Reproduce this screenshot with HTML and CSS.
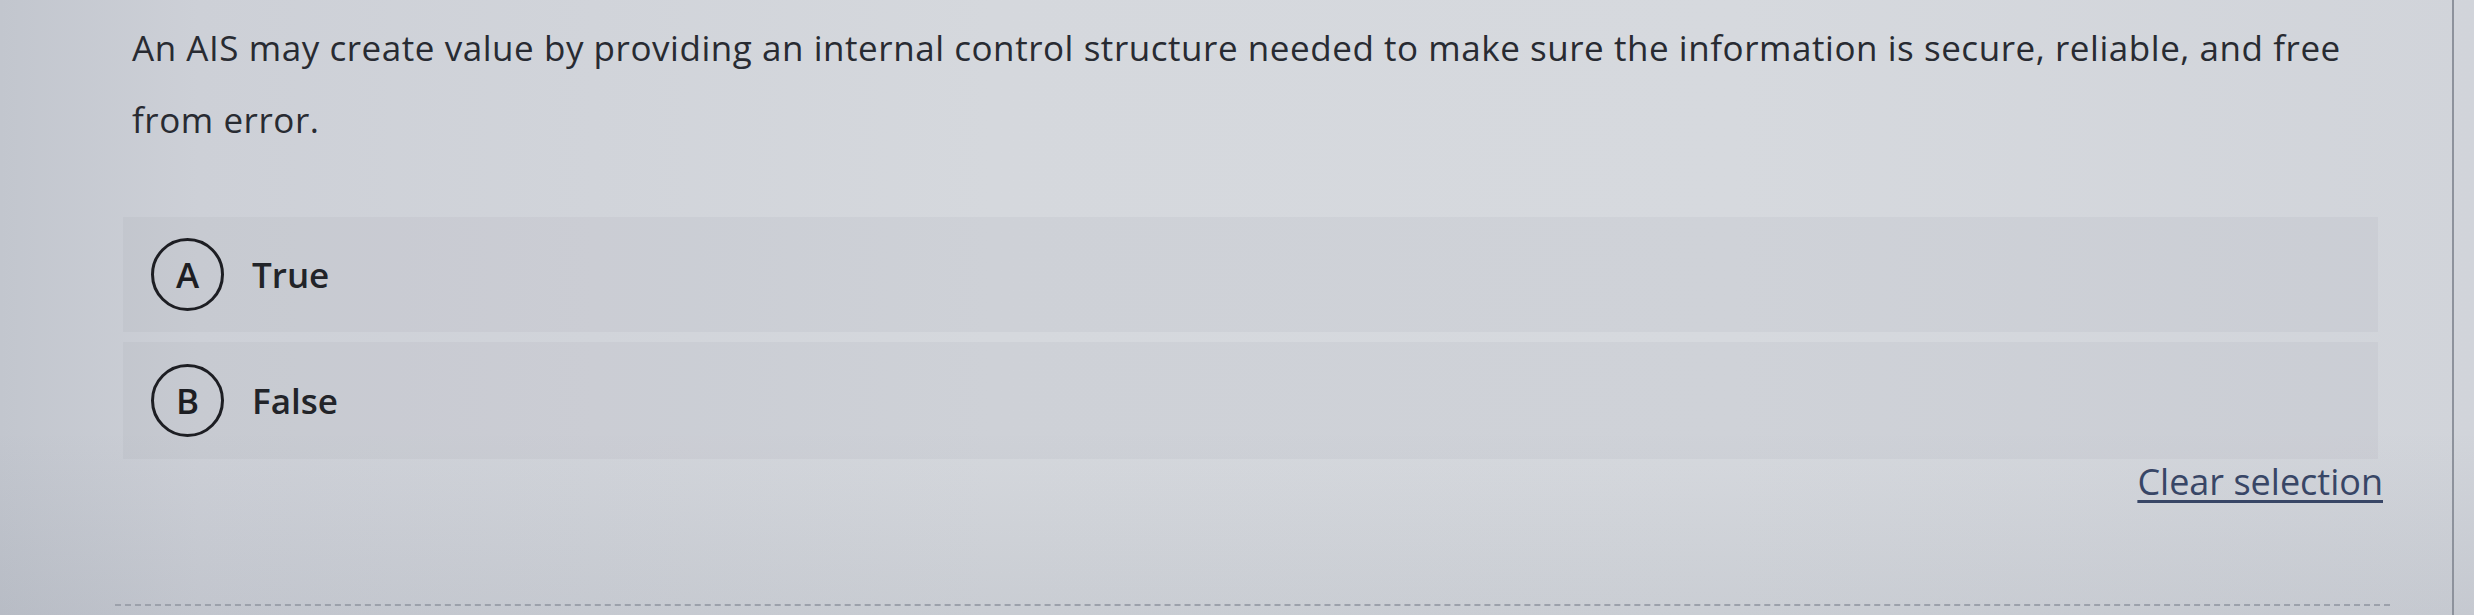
FILE: index.html
```html
<!DOCTYPE html>
<html lang="en">
<head>
    <meta charset="UTF-8">
    <meta name="viewport" content="width=device-width, initial-scale=1.0">
    <title>Question</title>
    <link rel="stylesheet" href="styles.css">
</head>
<body>

    <div class="panel">
        <div class="question">
            <p class="prompt">An AIS may create value by providing an internal control structure needed to make sure the information is secure, reliable, and free from error.</p>

            <ul class="choices">
                <li class="choice">
                    <span class="letter">A</span>
                    <span class="choice-text">True</span>
                </li>
                <li class="choice">
                    <span class="letter">B</span>
                    <span class="choice-text">False</span>
                </li>
            </ul>

            <div class="actions">
                <a href="#" class="clear-link">Clear selection</a>
            </div>
        </div>
        <div class="divider"></div>
    </div>

</body>
</html>
```

FILE: styles.css
```css
body {
    margin: 0;
    height: 615px;
    overflow: hidden;
    font-family: "Open Sans", "Liberation Sans", sans-serif;
    color: #282b32;
    background-color: #d2d5db;
    background-image:
        linear-gradient(180deg, rgba(255, 255, 255, 0) 70%, rgba(60, 70, 90, 0.08) 100%),
        linear-gradient(90deg, #c2c6ce 0%, #cdd0d7 8%, #d5d8dd 40%, #d6d9de 70%, #d1d4da 100%);
}
.panel {
    width: 2329px;
    height: 615px;
    padding-left: 123px;
    border-right: 2px solid #8d929c;
}
.question {
    width: 2255px;
}
.prompt {
    margin: 0;
    padding: 12px 0 0 9px;
    font-size: 35px;
    letter-spacing: 0.55px;
    line-height: 72px;
}
.choices {
    list-style: none;
    margin: 61px 0 0;
    padding: 0;
}
.choice {
    display: flex;
    align-items: center;
    gap: 28px;
    height: 115px;
    margin-bottom: 10px;
    padding-left: 28px;
    background-color: rgba(70, 80, 100, 0.045);
    cursor: pointer;
}
.choice:last-child {
    margin-bottom: 0;
    height: 117px;
}
.letter {
    display: flex;
    justify-content: center;
    align-items: center;
    width: 67px;
    height: 67px;
    border: 3px solid #1d1e23;
    border-radius: 50%;
    font-size: 35px;
    font-weight: 600;
    color: #1d1e23;
}
.choice-text {
    font-size: 35px;
    font-weight: 600;
    color: #222429;
}
.actions {
    display: flex;
    justify-content: flex-end;
    margin: 3px -5px 0 0;
}
.clear-link {
    font-size: 36px;
    line-height: 40px;
    color: #384666;
    text-decoration: underline;
    text-decoration-thickness: 3px;
    text-underline-offset: 5px;
}
.divider {
    margin: 102px 0 0 -8px;
    width: 2275px;
    border-top: 2px dashed #9ca1ab;
}
```
